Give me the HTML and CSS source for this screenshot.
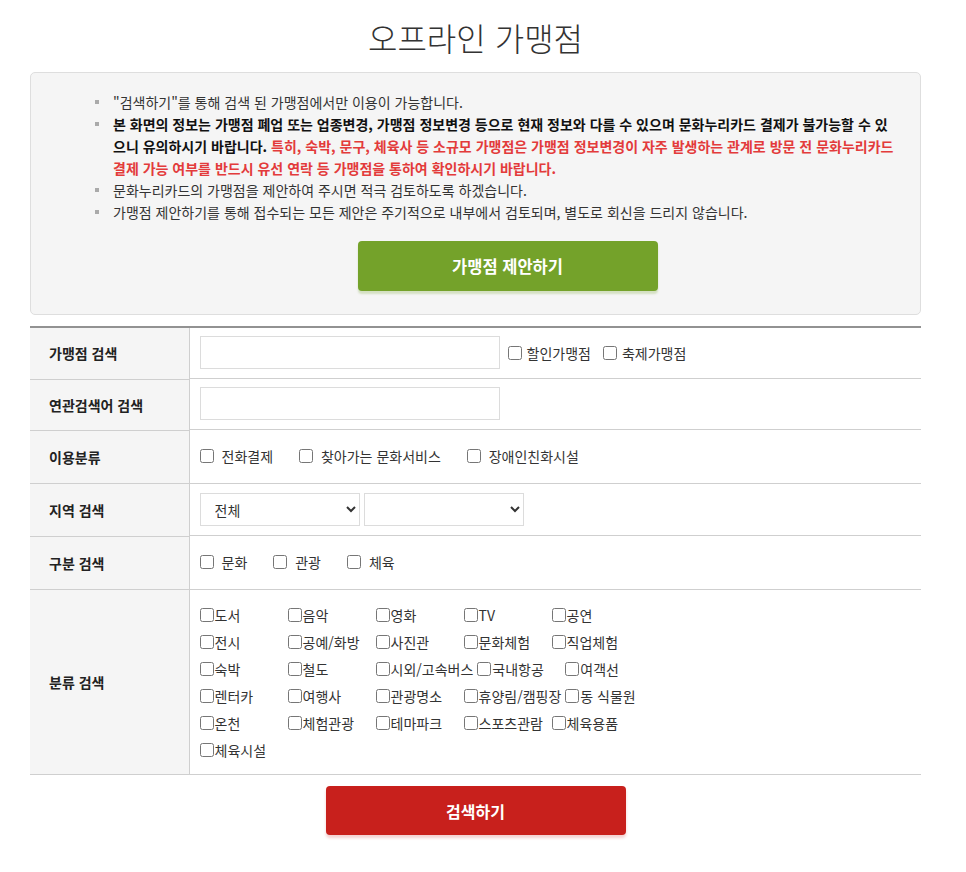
FILE: index.html
```html
<!DOCTYPE html>
<html lang="ko">
<head>
<meta charset="utf-8">
<title>오프라인 가맹점</title>
<link rel="stylesheet" href="styles.css">
</head>
<body>
<div class="page">
  <h1 class="title">오프라인 가맹점</h1>

  <div class="notice">
    <ul class="notice-list">
      <li>"검색하기"를 통해 검색 된 가맹점에서만 이용이 가능합니다.</li>
      <li><strong>본 화면의 정보는 가맹점 폐업 또는 업종변경, 가맹점 정보변경 등으로 현재 정보와 다를 수 있으며 문화누리카드 결제가 불가능할 수 있으니 유의하시기 바랍니다.</strong> <strong class="red">특히, 숙박, 문구, 체육사 등 소규모 가맹점은 가맹점 정보변경이 자주 발생하는 관계로 방문 전 문화누리카드 결제 가능 여부를 반드시 유선 연락 등 가맹점을 통하여 확인하시기 바랍니다.</strong></li>
      <li>문화누리카드의 가맹점을 제안하여 주시면 적극 검토하도록 하겠습니다.</li>
      <li>가맹점 제안하기를 통해 접수되는 모든 제안은 주기적으로 내부에서 검토되며, 별도로 회신을 드리지 않습니다.</li>
    </ul>
    <div class="btn-row">
      <a class="btn btn-green" href="#">가맹점 제안하기</a>
    </div>
  </div>

  <table class="search-table">
    <tbody>
      <tr>
        <th>가맹점 검색</th>
        <td class="td-input td-text">
          <input type="text" class="text-input">
          <label class="chk first"><input type="checkbox">할인가맹점</label>
          <label class="chk"><input type="checkbox">축제가맹점</label>
        </td>
      </tr>
      <tr>
        <th>연관검색어 검색</th>
        <td class="td-input td-text"><input type="text" class="text-input"></td>
      </tr>
      <tr>
        <th>이용분류</th>
        <td class="td-chk">
          <label class="opt"><input type="checkbox">전화결제</label>
          <label class="opt"><input type="checkbox">찾아가는 문화서비스</label>
          <label class="opt"><input type="checkbox">장애인친화시설</label>
        </td>
      </tr>
      <tr>
        <th>지역 검색</th>
        <td class="td-input">
          <div class="selects">
            <select class="sel"><option>전체</option></select>
            <select class="sel"><option></option></select>
          </div>
        </td>
      </tr>
      <tr>
        <th>구분 검색</th>
        <td class="td-chk">
          <label class="opt"><input type="checkbox">문화</label>
          <label class="opt"><input type="checkbox">관광</label>
          <label class="opt"><input type="checkbox">체육</label>
        </td>
      </tr>
      <tr>
        <th>분류 검색</th>
        <td class="td-cat">
          <div class="cats">
            <label class="cat"><input type="checkbox">도서</label>
            <label class="cat"><input type="checkbox">음악</label>
            <label class="cat"><input type="checkbox">영화</label>
            <label class="cat"><input type="checkbox">TV</label>
            <label class="cat"><input type="checkbox">공연</label>
            <label class="cat"><input type="checkbox">전시</label>
            <label class="cat"><input type="checkbox">공예/화방</label>
            <label class="cat"><input type="checkbox">사진관</label>
            <label class="cat"><input type="checkbox">문화체험</label>
            <label class="cat"><input type="checkbox">직업체험</label>
            <label class="cat"><input type="checkbox">숙박</label>
            <label class="cat"><input type="checkbox">철도</label>
            <label class="cat"><input type="checkbox">시외/고속버스</label>
            <label class="cat"><input type="checkbox">국내항공</label>
            <label class="cat"><input type="checkbox">여객선</label>
            <label class="cat"><input type="checkbox">렌터카</label>
            <label class="cat"><input type="checkbox">여행사</label>
            <label class="cat"><input type="checkbox">관광명소</label>
            <label class="cat"><input type="checkbox">휴양림/캠핑장</label>
            <label class="cat"><input type="checkbox">동 식물원</label>
            <label class="cat"><input type="checkbox">온천</label>
            <label class="cat"><input type="checkbox">체험관광</label>
            <label class="cat"><input type="checkbox">테마파크</label>
            <label class="cat"><input type="checkbox">스포츠관람</label>
            <label class="cat"><input type="checkbox">체육용품</label>
            <label class="cat"><input type="checkbox">체육시설</label>
          </div>
        </td>
      </tr>
    </tbody>
  </table>

  <div class="btn-row bottom">
    <a class="btn btn-red" href="#">검색하기</a>
  </div>
</div>
</body>
</html>
```

FILE: styles.css
```css
* { box-sizing: border-box; }
html, body { margin: 0; padding: 0; background: #fff; }
body {
  font-family: "Noto Sans CJK KR", "Noto Sans", "Liberation Sans", sans-serif;
  font-size: 14px;
  color: #333;
}
.page {
  padding: 14px 45px 30px 30px;
}
.title {
  margin: 0 0 12px;
  text-align: center;
  font-size: 32px;
  line-height: 46px;
  font-weight: 300;
  color: #333;
}
.notice {
  background: #f5f5f5;
  border: 1px solid #dedede;
  border-radius: 5px;
  padding: 18px 26px 23px 64px;
}
.notice-list {
  list-style: none;
  margin: 0;
  padding: 0;
}
.notice-list li {
  position: relative;
  padding-left: 18px;
  line-height: 22px;
  font-size: 14px;
  color: #333;
}
.notice-list li::before {
  content: "";
  position: absolute;
  left: 0;
  top: 9px;
  width: 4px;
  height: 4px;
  background: #aaa;
}
.notice-list strong { color: #111; font-weight: 700; }
.notice-list strong.red { color: #e33b3b; }
.btn-row {
  display: flex;
  justify-content: center;
  margin-top: 18px;
  padding-left: 26px;
}
.btn {
  display: flex;
  align-items: center;
  justify-content: center;
  width: 300px;
  height: 50px;
  border-radius: 4px;
  color: #fff;
  font-weight: 700;
  font-size: 16px;
  text-decoration: none;
}
.btn-green {
  background: #74a22a;
  font-size: 16.5px;
  box-shadow: 0 3px 2px rgba(116, 162, 42, 0.25);
}
.btn-red {
  background: #c8201c;
  height: 49px;
  box-shadow: 0 3px 3px rgba(200, 32, 28, 0.2);
}
.btn-row.bottom {
  margin-top: 11px;
  padding-left: 0;
}
.search-table {
  width: 100%;
  margin-top: 11px;
  border-collapse: collapse;
  border-top: 2px solid #929292;
}
.search-table th,
.search-table td {
  border-bottom: 1px solid #cfcfcf;
}
.search-table th {
  width: 159px;
  background: #f5f5f5;
  border-right: 1px solid #cfcfcf;
  text-align: left;
  padding: 0 0 0 19px;
  font-weight: 700;
  color: #222;
  font-size: 14px;
  line-height: 18px;
}
.search-table td {
  padding: 9px 10px 9px;
  background: #fff;
}
.search-table td.td-text {
  padding: 8px 10px 9px;
}
.td-input {
  display: flex;
  align-items: center;
}
.text-input {
  width: 300px;
  height: 33px;
  border: 1px solid #dcdcdc;
  margin: 0;
  padding: 0 8px;
  background: #fff;
}
input[type="checkbox"] {
  width: 14px;
  height: 14px;
  margin: 0;
}
.chk {
  display: inline-flex;
  align-items: center;
  gap: 5px;
  margin-right: 12px;
  line-height: 20px;
  color: #333;
}
.chk.first { margin-left: 8px; }
.search-table td.td-chk {
  padding: 16px 10px 16px;
  line-height: 20px;
}
.opt {
  display: inline-flex;
  align-items: center;
  gap: 8px;
  margin-right: 22px;
  color: #333;
}
.selects {
  display: flex;
  gap: 4px;
}
.sel {
  width: 160px;
  height: 33px;
  border: 1px solid #dcdcdc;
  background: #fff;
  padding: 0 8px 0 10px;
  font-family: inherit;
  font-size: 14px;
  color: #333;
  border-radius: 0;
}
.search-table td.td-cat {
  padding: 11px 10px 11px;
}
.cats {
  display: flex;
  flex-wrap: wrap;
  column-gap: 4px;
  width: 460px;
}
.cat {
  display: inline-flex;
  align-items: center;
  gap: 1px;
  min-width: 84px;
  height: 27px;
  color: #333;
  white-space: nowrap;
}
```
